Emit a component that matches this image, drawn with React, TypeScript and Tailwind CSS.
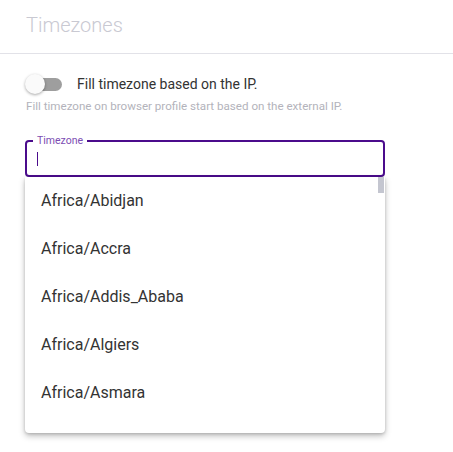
import React from "react";

const ZONES = [
  "Africa/Abidjan",
  "Africa/Accra",
  "Africa/Addis_Ababa",
  "Africa/Algiers",
  "Africa/Asmara",
];

export default function App() {
  return (
    <div
      className="w-[453px] h-[452px] bg-white text-[#333] overflow-hidden"
      style={{ fontFamily: "Roboto, 'Liberation Sans', sans-serif" }}
    >
      {/* Header */}
      <div className="h-[54px] px-[26px] pt-[11px] border-b border-[#e2e2e8]">
        <h2 className="text-[20px] leading-[28px] font-light text-[#c9c9d2]">Timezones</h2>
      </div>

      <div className="px-[25px] pt-[19px]">
        {/* Switch */}
        <div className="flex items-center h-[22px]">
          <div className="relative w-[37px] h-[20px] flex items-center">
            <div className="ml-[6px] w-[31px] h-[13px] rounded-full bg-[#9e9e9e]" />
            <div className="absolute left-0 top-0 w-[20px] h-[20px] rounded-full bg-[#fafafa] shadow-[0_1px_3px_rgba(0,0,0,0.35)]" />
          </div>
          <span className="ml-[15px] text-[14px] text-[#333]">Fill timezone based on the IP.</span>
        </div>
        <p className="mt-[4px] text-[11.6px] leading-[14px] text-[#b3b3bb] pl-px">
          Fill timezone on browser profile start based on the external IP.
        </p>

        {/* Input + dropdown */}
        <div className="relative mt-[27px] w-[360px]">
          <div className="relative h-[37px] rounded-[4px] border-2 border-[#4b0c8c]">
            <span className="absolute -top-[8px] left-[6px] px-[4px] bg-white text-[10.5px] leading-[13px] text-[#7c4db3]">
              Timezone
            </span>
            <div className="absolute left-[10px] top-[10px] w-px h-[14px] bg-[#4b0c8c]" />
          </div>

          <div className="absolute left-0 top-[37px] w-[360px] h-[256px] bg-white rounded-b-[4px] shadow-[0_3px_6px_rgba(0,0,0,0.25),0_1px_3px_rgba(0,0,0,0.15)] overflow-hidden">
            <div className="absolute right-[1px] top-0 w-[6px] h-[16px] bg-[#c4c6d0]" />
            <ul>
              {ZONES.map((z) => (
                <li key={z} className="h-[48px] flex items-center px-[16px] text-[16px] text-[#333]">
                  {z}
                </li>
              ))}
            </ul>
          </div>
        </div>
      </div>
    </div>
  );
}
